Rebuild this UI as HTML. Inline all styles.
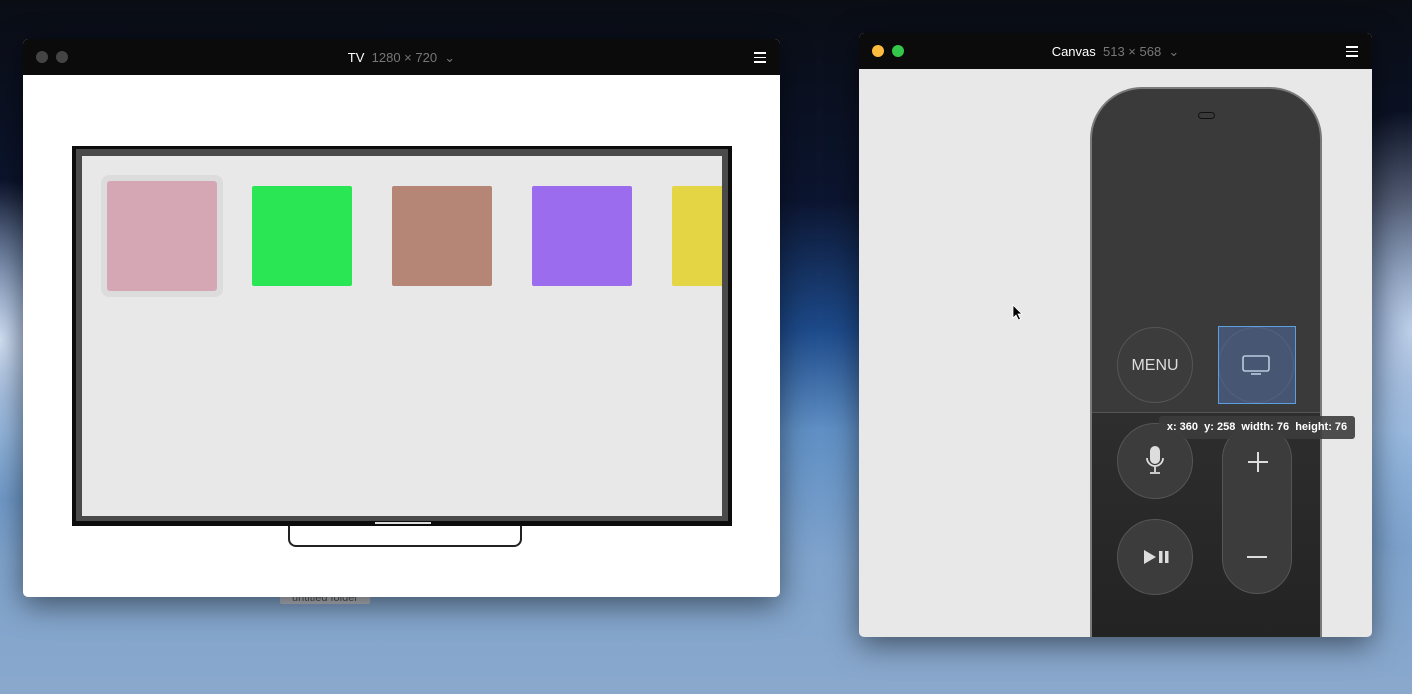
<!DOCTYPE html><html><head><style>
body{margin:0;width:1412px;height:694px;overflow:hidden;position:relative;font-family:"Liberation Sans",sans-serif;
background:radial-gradient(ellipse 120px 160px at 0px 340px,rgba(230,240,255,.9),rgba(120,170,220,0) 100%),radial-gradient(ellipse 140px 220px at 1412px 330px,rgba(230,240,255,.8),rgba(120,170,220,0) 100%),linear-gradient(#0a0d14 0px,#0c1530 200px,#1d4a8a 330px,#5f8fc4 430px,#7fa3cc 560px,#8aa8cc 694px);}
.win{position:absolute;border-radius:5px;overflow:hidden;box-shadow:0 8px 30px rgba(0,0,0,.5)}
.bar{background:#0b0b0b;height:36px;position:relative;color:#fff;font-size:13px}
.bar .t{position:absolute;width:100%;text-align:center;top:11px}
.bar .t span{color:#777}
.dot{position:absolute;width:12px;height:12px;border-radius:50%;top:12px}
.ham{position:absolute;right:14px;top:13px;width:12px}
.ham i{display:block;height:1.5px;background:#fff;margin-bottom:3px}
.abs{position:absolute}
.c{position:absolute;border-radius:50%;border:1px solid #555;background:#3c3c3c;box-sizing:border-box}
</style></head><body>
<div class="abs" style="left:280px;top:588px;width:90px;height:16px;background:#b8bcc4;border-radius:2px;font-size:11px;color:#555;text-align:center;line-height:20px">untitled folder</div>
<div class="win" style="left:23px;top:39px;width:757px;height:558px;background:#fff">
 <div class="bar"><div class="dot" style="left:13px;background:#444"></div><div class="dot" style="left:33px;background:#444"></div>
 <div class="t">TV&nbsp;&nbsp;<span>1280 × 720 &nbsp;⌄</span></div><div class="ham"><i></i><i></i><i></i></div></div>
</div>
<div class="abs" style="left:72px;top:146px;width:660px;height:380px;background:#0c0c0c"></div>
<div class="abs" style="left:76px;top:149px;width:652px;height:372px;background:#4a4a4a"></div>
<div class="abs" style="left:82px;top:156px;width:640px;height:360px;background:#e8e8e8;overflow:hidden">
 <div class="abs" style="left:19px;top:19px;width:122px;height:122px;background:#dcdcdc;border-radius:8px"></div>
 <div class="abs" style="left:25px;top:25px;width:110px;height:110px;background:#d5a6b4;border-radius:3px"></div>
 <div class="abs" style="left:170px;top:30px;width:100px;height:100px;background:#2ae655;border-radius:2px"></div>
 <div class="abs" style="left:310px;top:30px;width:100px;height:100px;background:#b58676;border-radius:2px"></div>
 <div class="abs" style="left:450px;top:30px;width:100px;height:100px;background:#9c6cee;border-radius:2px"></div>
 <div class="abs" style="left:590px;top:30px;width:100px;height:100px;background:#e4d544;border-radius:2px"></div>
</div>
<div class="abs" style="left:375px;top:522px;width:56px;height:2px;background:#ddd"></div>
<div class="abs" style="left:288px;top:526px;width:230px;height:19px;border:2px solid #222;border-top:none;border-radius:0 0 8px 8px"></div>

<div class="win" style="left:859px;top:33px;width:513px;height:604px;background:#e8e8e8">
 <div class="bar"><div class="dot" style="left:13px;background:#fdbc40"></div><div class="dot" style="left:33px;background:#34c84a"></div>
 <div class="t">Canvas&nbsp;&nbsp;<span>513 × 568 &nbsp;⌄</span></div><div class="ham"><i></i><i></i><i></i></div></div>
</div>
<div class="abs" style="left:1090px;top:87px;width:232px;height:550px;background:#3a3a3a;border:2px solid #7a7a7a;border-bottom:none;border-radius:52px 52px 0 0;box-sizing:border-box;overflow:hidden">
 <div class="abs" style="left:0;top:323px;width:232px;height:240px;background:linear-gradient(#2e2e2e,#222);border-top:1px solid #555"></div>
</div>
<div class="abs" style="left:1198px;top:112px;width:15px;height:5px;border:1.5px solid #111;border-radius:4px"></div>
<div class="c" style="left:1117px;top:327px;width:76px;height:76px;color:#ddd;font-size:16px;text-align:center;line-height:76px">MENU</div>
<div class="c" style="left:1218px;top:327px;width:76px;height:76px"></div>
<div class="abs" style="left:1218px;top:326px;width:78px;height:78px;background:rgba(80,110,160,.55);border:1px solid #5aa0e0;box-sizing:border-box"></div>
<svg class="abs" style="left:1241px;top:354px" width="30" height="22"><rect x="2" y="2" width="26" height="15" rx="2" fill="none" stroke="#bcd" stroke-width="1.6"/><line x1="10" y1="20" x2="20" y2="20" stroke="#bcd" stroke-width="1.6"/></svg>
<div class="c" style="left:1117px;top:423px;width:76px;height:76px"></div>
<svg class="abs" style="left:1143px;top:444px" width="24" height="32"><rect x="7" y="2" width="10" height="18" rx="5" fill="#ddd"/><path d="M4 14a8 8 0 0 0 16 0M12 22v6M7 29h10" stroke="#ddd" stroke-width="1.8" fill="none"/></svg>
<div class="c" style="left:1117px;top:519px;width:76px;height:76px"></div>
<svg class="abs" style="left:1142px;top:548px" width="30" height="18"><path d="M2 2l12 7-12 7z" fill="#ddd"/><rect x="17" y="3" width="3.5" height="12" fill="#ddd"/><rect x="23" y="3" width="3.5" height="12" fill="#ddd"/></svg>
<div class="abs" style="left:1222px;top:424px;width:70px;height:170px;border-radius:35px;background:#3c3c3c;border:1px solid #555;box-sizing:border-box"></div>
<div class="abs" style="left:1248px;top:461px;width:20px;height:2px;background:#ddd"></div><div class="abs" style="left:1257px;top:452px;width:2px;height:20px;background:#ddd"></div>
<div class="abs" style="left:1247px;top:556px;width:20px;height:2px;background:#ddd"></div>
<div class="abs" style="left:1159px;top:416px;width:196px;height:23px;background:rgba(60,60,60,.9);border-radius:3px;color:#fff;font-size:11px;font-weight:bold;line-height:23px;text-align:center">x: 360&nbsp; y: 258&nbsp; width: 76&nbsp; height: 76</div>
<svg class="abs" style="left:1012px;top:304px" width="12" height="18"><path d="M1 1v13l3-3 2.5 5 2-1-2.5-5h4z" fill="#000" stroke="#fff" stroke-width=".8"/></svg>
</body></html>
